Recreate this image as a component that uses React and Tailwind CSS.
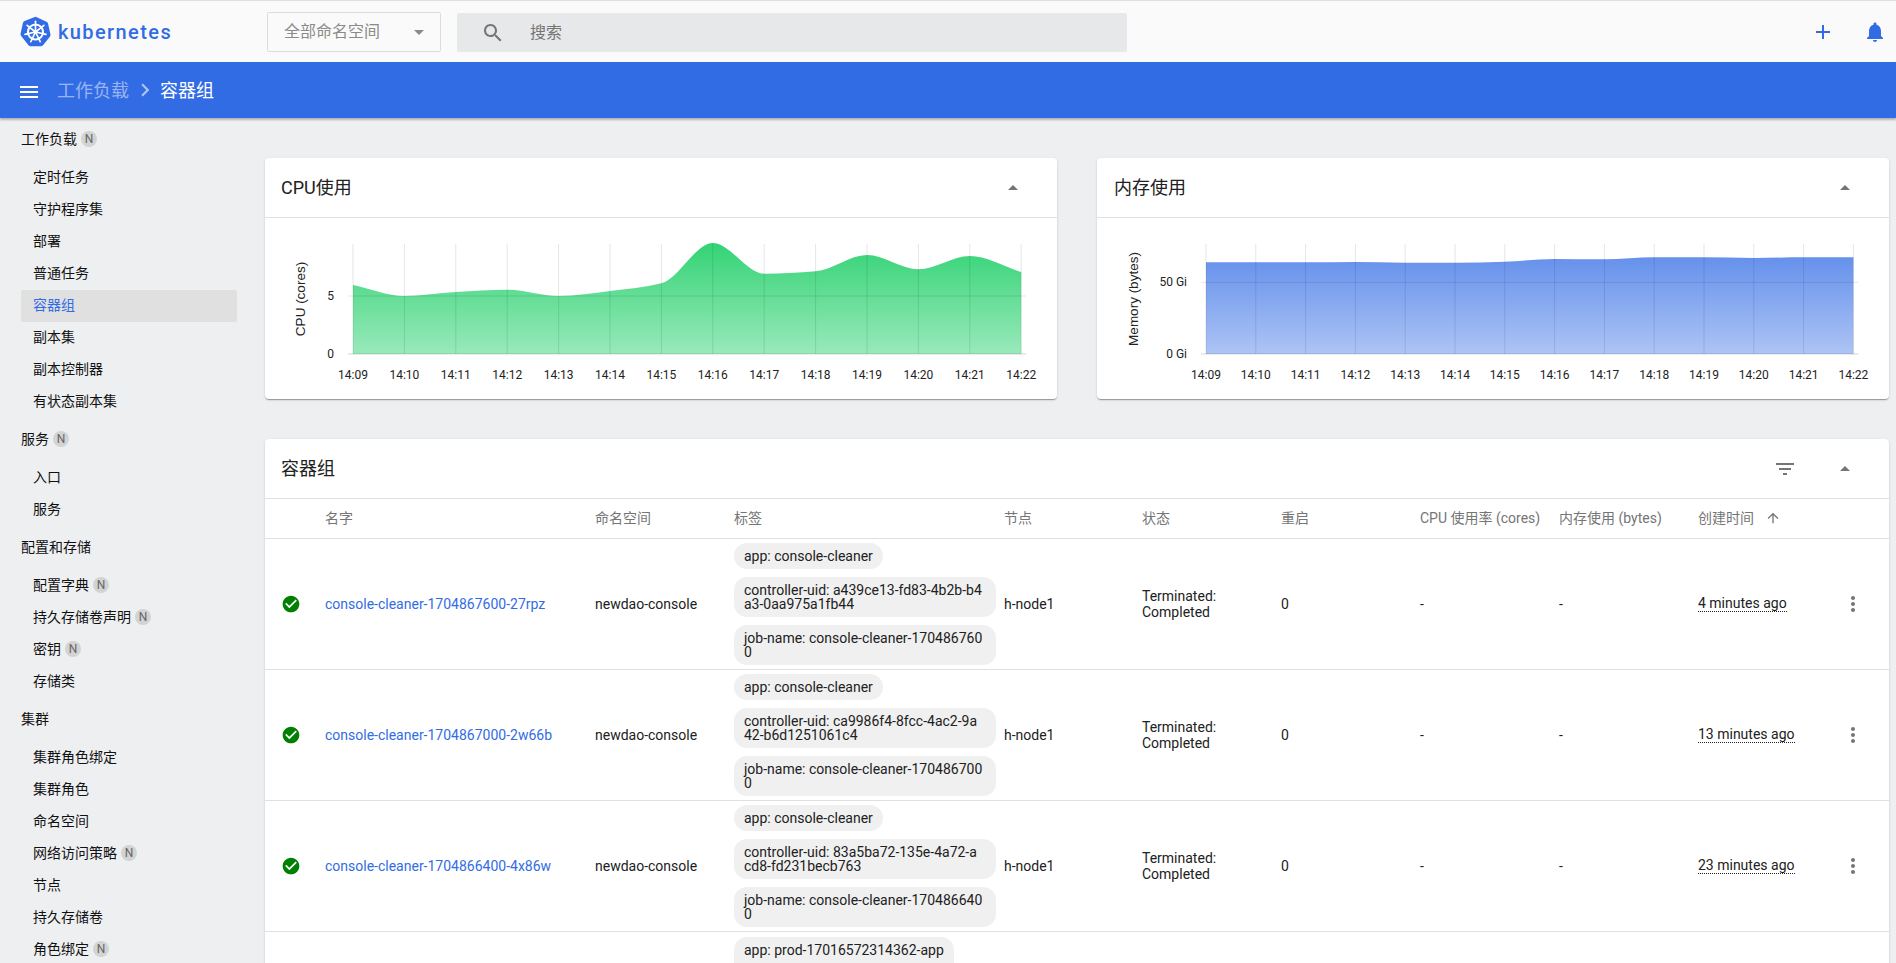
import React from "react";

const font = { fontFamily: 'Roboto, "Noto Sans CJK SC", sans-serif' };

const menu = [
  { title: "工作负载", badge: true, items: [["定时任务"], ["守护程序集"], ["部署"], ["普通任务"], ["容器组", false, true], ["副本集"], ["副本控制器"], ["有状态副本集"]] },
  { title: "服务", badge: true, items: [["入口"], ["服务"]] },
  { title: "配置和存储", items: [["配置字典", true], ["持久存储卷声明", true], ["密钥", true], ["存储类"]] },
  { title: "集群", items: [["集群角色绑定"], ["集群角色"], ["命名空间"], ["网络访问策略", true], ["节点"], ["持久存储卷"], ["角色绑定", true]] },
];

const pods = [
  { name: "console-cleaner-1704867600-27rpz", uid: "controller-uid: a439ce13-fd83-4b2b-b4\na3-0aa975a1fb44", job: "job-name: console-cleaner-170486760\n0", age: "4 minutes ago" },
  { name: "console-cleaner-1704867000-2w66b", uid: "controller-uid: ca9986f4-8fcc-4ac2-9a\n42-b6d1251061c4", job: "job-name: console-cleaner-170486700\n0", age: "13 minutes ago" },
  { name: "console-cleaner-1704866400-4x86w", uid: "controller-uid: 83a5ba72-135e-4a72-a\ncd8-fd231becb763", job: "job-name: console-cleaner-170486640\n0", age: "23 minutes ago" },
];

const times = ["14:09", "14:10", "14:11", "14:12", "14:13", "14:14", "14:15", "14:16", "14:17", "14:18", "14:19", "14:20", "14:21", "14:22"];

// same curve as d3 curveMonotoneX
function monotonePath(pts) {
  const n = pts.length;
  const slopes = [];
  for (let i = 0; i < n - 1; i++) slopes.push((pts[i + 1][1] - pts[i][1]) / (pts[i + 1][0] - pts[i][0]));
  const tan = pts.map((_, i) => {
    if (i === 0) return slopes[0];
    if (i === n - 1) return slopes[n - 2];
    const a = slopes[i - 1];
    const b = slopes[i];
    if (a * b <= 0) return 0;
    return (2 * a * b) / (a + b);
  });
  let d = `M${pts[0][0]},${pts[0][1]}`;
  for (let i = 0; i < n - 1; i++) {
    const dx = (pts[i + 1][0] - pts[i][0]) / 3;
    d += `C${pts[i][0] + dx},${pts[i][1] + tan[i] * dx} ${pts[i + 1][0] - dx},${pts[i + 1][1] - tan[i + 1] * dx} ${pts[i + 1][0]},${pts[i + 1][1]}`;
  }
  return d;
}

function Icon({ d, size = 24, className = "" }) {
  return (
    <svg width={size} height={size} viewBox="0 0 24 24" className={`shrink-0 fill-current ${className}`}>
      <path d={d} />
    </svg>
  );
}

const ARROW_UP = "M7 14l5-5 5 5z";

function Logo() {
  const spokes = [0, 1, 2, 3, 4, 5, 6];
  return (
    <svg width="31" height="31" viewBox="0 0 32 32" className="shrink-0">
      <path d="M14.6 1.2a3 3 0 0 1 2.8 0l9.9 4.8a3 3 0 0 1 1.7 2.1l2.4 10.7a3 3 0 0 1-.6 2.6l-6.8 8.6a3 3 0 0 1-2.4 1.1H10.4A3 3 0 0 1 8 29.2l-6.8-8.6a3 3 0 0 1-.6-2.6L3 7.300a3 3 0 0 1 1.700-2.100z" fill="#326ce5" />
      <circle cx="16" cy="16.500" r="7.800" fill="none" stroke="#fff" strokeWidth="2.100" />
      {spokes.map((i) => (
        <line key={i} x1="16" y1="16.500" x2="16" y2="5.400" stroke="#fff" strokeWidth="1.700" strokeLinecap="round" transform={`rotate(${(i * 360) / 7} 16 16.500)`} />
      ))}
      <circle cx="16" cy="16.500" r="2.200" fill="#fff" />
    </svg>
  );
}

function Badge() {
  return (
    <span className="ml-[4px] flex h-[16px] w-[16px] items-center justify-center rounded-full bg-[#d3d3d3] text-[12px] text-[#666666]">
      N
    </span>
  );
}

function Sidebar() {
  return (
    <aside className="w-[265px] shrink-0">
      {menu.map((section) => (
        <div key={section.title}>
          <div className="flex h-[44px] items-center pb-[2px] pl-[21px] text-[14px] text-[#111111]">
            {section.title}
            {section.badge && <Badge />}
          </div>
          {section.items.map(([label, badge, active]) => (
            <div
              key={label}
              className={`ml-[21px] flex h-[32px] w-[216px] items-center rounded-[2px] pb-[2px] pl-[12px] text-[14px] ${active ? "bg-[#e0e0e0] text-[#326ce5]" : "text-[#111111]"}`}
            >
              {label}
              {badge && <Badge />}
            </div>
          ))}
        </div>
      ))}
    </aside>
  );
}

function Chart({ data, ticks, axisLabel, labelX, plotLeft, step, color, id }) {
  // y values are relative to the top of the chart area
  const base = 136;
  const plotRight = plotLeft + step * 13;
  const pts = data.map((y, i) => [plotLeft + step * i, y]);
  const line = monotonePath(pts);
  return (
    <svg width="792" height="181" viewBox="0 0 792 181" className="block">
      <defs>
        <linearGradient id={id} x1="0" y1="25" x2="0" y2={base} gradientUnits="userSpaceOnUse">
          <stop offset="0" stopColor={color} stopOpacity="0.8" />
          <stop offset="1" stopColor={color} stopOpacity="0.4" />
        </linearGradient>
      </defs>
      <path d={`${line}L${plotRight},${base}L${plotLeft},${base}Z`} fill={`url(#${id})`} />
      {times.map((t, i) => (
        <g key={t}>
          <line x1={plotLeft + step * i} x2={plotLeft + step * i} y1="26" y2={base} stroke="#000" strokeOpacity="0.1" />
          <text x={plotLeft + step * i} y="161" textAnchor="middle" fontSize="12" fill="#222222" style={font}>
            {t}
          </text>
        </g>
      ))}
      {ticks.map(([y, label]) => (
        <g key={label}>
          <line x1={plotLeft - 5} x2={plotRight + 5} y1={y} y2={y} stroke="#000" strokeOpacity={y === base ? 0.08 : 0.1} strokeWidth={y === base ? 2 : 1} />
          <text x={plotLeft - 19} y={y + 4} textAnchor="end" fontSize="12" fill="#222222" style={font}>
            {label}
          </text>
        </g>
      ))}
      <text transform={`translate(${labelX} 81) rotate(-90)`} textAnchor="middle" fontSize="13.500" fill="#222222" style={{ fontFamily: '"Liberation Sans", sans-serif' }}>
        {axisLabel}
      </text>
    </svg>
  );
}

const cardClass = "rounded-[4px] bg-white shadow-[0_2px_1px_-1px_rgba(0,0,0,0.2),0_1px_1px_0_rgba(0,0,0,0.14),0_1px_3px_0_rgba(0,0,0,0.12)]";

function ChartCard({ title, titleLeft, children }) {
  return (
    <section className={`h-[241px] w-[792px] ${cardClass}`}>
      <header className={`flex h-[60px] items-center justify-between border-b border-[#e0e0e0] pr-[32px] text-[18px] text-[#212121] ${titleLeft}`}>
        <span>{title}</span>
        <Icon d={ARROW_UP} className="text-[#757575]" />
      </header>
      {children}
    </section>
  );
}

const tableCols = "grid grid-cols-[60px_270px_139px_270px_138px_139px_139px_139px_139px_139px_1fr]";

function Chip({ children, wide }) {
  return (
    <span className={`block rounded-[13px] bg-[#f0f0f0] px-[10px] py-[6px] text-[14px] leading-[14px] whitespace-pre-line text-[#212121] ${wide ? "w-[262px]" : "w-fit"}`}>
      {children}
    </span>
  );
}

function PodRow({ pod }) {
  return (
    <div className={`${tableCols} h-[131px] items-center border-b border-[#e0e0e0] text-[14px] text-[#212121]`}>
      <span className="pl-[16px]">
        <Icon d="M12 2C6.48 2 2 6.48 2 12s4.48 10 10 10 10-4.48 10-10S17.52 2 12 2zm-2 15l-5-5 1.410-1.410L10 14.170l7.590-7.590L19 8l-9 9z" size={20} className="text-[#008000]" />
      </span>
      <span className="text-[#326ce5]">{pod.name}</span>
      <span>newdao-console</span>
      <div className="flex flex-col gap-[8px]">
        <Chip>app: console-cleaner</Chip>
        <Chip wide>{pod.uid}</Chip>
        <Chip wide>{pod.job}</Chip>
      </div>
      <span>h-node1</span>
      <span className="leading-[16px]">
        Terminated:
        <br />
        Completed
      </span>
      <span>0</span>
      <span>-</span>
      <span>-</span>
      <span className="w-fit border-b border-dotted border-[#212121] leading-[15px]">{pod.age}</span>
      <span className="pl-[4px] text-[#757575]">
        <Icon d="M12 8c1.100 0 2-.9 2-2s-.9-2-2-2-2 .9-2 2 .9 2 2 2zm0 2c-1.100 0-2 .9-2 2s.9 2 2 2 2-.9 2-2-.9-2-2-2zm0 6c-1.100 0-2 .9-2 2s.9 2 2 2 2-.9 2-2-.9-2-2-2z" />
      </span>
    </div>
  );
}

export default function App() {
  return (
    <div className="flex h-screen flex-col overflow-hidden bg-[#eeeff1]" style={font}>
      <header className="flex h-[62px] shrink-0 items-center border-t border-[#dfdfdf] bg-[#fafafa]">
        <div className="flex w-[267px] items-center pl-[20px]">
          <Logo />
          <span className="ml-[7px] text-[20px] font-medium tracking-[1.4px] text-[#326ce5]">kubernetes</span>
        </div>
        <div className="flex h-[40px] w-[174px] items-center justify-between rounded-[2px] border border-[#dcdcdc] pr-[9px] pl-[16px] text-[16px] text-[#8a8a8a]">
          全部命名空间
          <Icon d="M7 10l5 5 5-5z" className="text-[#8a8a8a]" />
        </div>
        <div className="mt-[2px] ml-[16px] flex h-[39px] w-[670px] items-center rounded-[2px] bg-[#e6e8e9] pl-[24px] text-[16px] text-[#757575]">
          <Icon d="M15.500 14h-.79l-.28-.27C15.410 12.590 16 11.110 16 9.500 16 5.910 13.090 3 9.500 3S3 5.910 3 9.500 5.910 16 9.500 16c1.610 0 3.090-.59 4.230-1.570l.27.280v.79l5 4.990L20.490 19l-4.990-5zm-6 0C7.010 14 5 11.990 5 9.500S7.010 5 9.500 5 14 7.010 14 9.500 11.990 14 9.500 14z" />
          <span className="ml-[25px]">搜索</span>
        </div>
        <div className="ml-auto flex items-center gap-[28px] pr-[9px] text-[#326ce5]">
          <Icon d="M19 13h-6v6h-2v-6H5v-2h6V5h2v6h6v2z" />
          <Icon d="M12 22c1.100 0 2-.9 2-2h-4c0 1.100.89 2 2 2zm6-6v-5c0-3.070-1.640-5.640-4.500-6.320V4c0-.83-.67-1.500-1.500-1.500s-1.500.67-1.500 1.500v.68C7.630 5.360 6 7.920 6 11v5l-2 2v1h16v-1l-2-2z" />
        </div>
      </header>

      <div className="z-10 flex h-[56px] shrink-0 items-center bg-[#326ce5] pl-[17px] text-[18px] text-white shadow-[0_2px_2px_rgba(0,0,0,0.25)]">
        <Icon d="M3 18h18v-2H3v2zm0-5h18v-2H3v2zm0-7v2h18V6H3z" className="mt-[3px]" />
        <span className="ml-[16px] text-white/50">工作负载</span>
        <Icon d="M10 6L8.590 7.410 13.170 12l-4.580 4.590L10 18l6-6z" size={26} className="ml-[3px] text-white/60" />
        <span className="ml-[2px]">容器组</span>
      </div>

      <div className="flex min-h-0 flex-1">
        <Sidebar />
        <main className="min-w-0 flex-1 pt-[40px] pr-[7px]">
          <div className="flex gap-[40px]">
            <ChartCard title="CPU使用" titleLeft="pl-[16px]">
              <Chart
                id="cpuFill"
                color="#00c853"
                axisLabel="CPU (cores)"
                labelX={40}
                plotLeft={88}
                step={51.4}
                ticks={[[78, "5"], [136, "0"]]}
                data={[67, 78, 74, 71.700, 78, 73, 65.300, 25, 55.700, 53.300, 37, 51.300, 38, 54]}
              />
            </ChartCard>
            <ChartCard title="内存使用" titleLeft="pl-[17px]">
              <Chart
                id="memFill"
                color="#326ce5"
                axisLabel="Memory (bytes)"
                labelX={41}
                plotLeft={109}
                step={49.8}
                ticks={[[64.300, "50 Gi"], [136, "0 Gi"]]}
                data={[44.300, 44.300, 44.300, 44, 44.700, 44.700, 43.700, 41, 41.300, 39.300, 39.300, 40, 39.300, 39.300]}
              />
            </ChartCard>
          </div>

          <section className={`mt-[40px] ${cardClass}`}>
            <header className="flex h-[60px] items-center border-b border-[#e0e0e0] pr-[32px] pl-[16px] text-[18px] text-[#212121]">
              <span>容器组</span>
              <Icon d="M10 18h4v-2h-4v2zM3 6v2h18V6H3zm3 7h12v-2H6v2z" className="ml-auto text-[#757575]" />
              <Icon d={ARROW_UP} className="ml-[36px] text-[#757575]" />
            </header>
            <div className={`${tableCols} h-[40px] items-center border-b border-[#e0e0e0] text-[14px] text-[#757575]`}>
              <span />
              <span>名字</span>
              <span>命名空间</span>
              <span>标签</span>
              <span>节点</span>
              <span>状态</span>
              <span>重启</span>
              <span>CPU 使用率 (cores)</span>
              <span>内存使用 (bytes)</span>
              <span className="flex items-center gap-[11px]">
                创建时间
                <Icon d="M4 12l1.410 1.410L11 7.830V20h2V7.830l5.580 5.590L20 12l-8-8-8 8z" size={16} className="mb-[1px]" />
              </span>
              <span />
            </div>
            {pods.map((pod) => (
              <PodRow key={pod.name} pod={pod} />
            ))}
            <div className={`${tableCols} h-[131px] pt-[5px]`}>
              <span />
              <span />
              <span />
              <Chip>app: prod-17016572314362-app</Chip>
            </div>
          </section>
        </main>
      </div>
    </div>
  );
}
